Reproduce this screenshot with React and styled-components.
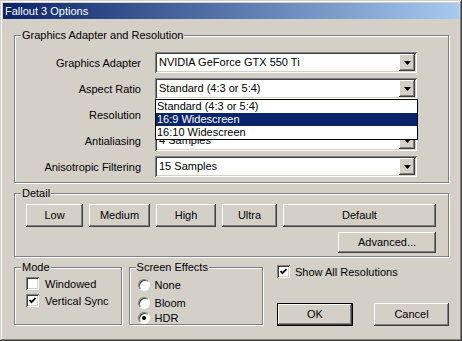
import React from 'react';
import styled, { createGlobalStyle } from 'styled-components';

const Global = createGlobalStyle`
  body {
    margin: 0;
    overflow: hidden;
    font-family: Tahoma, "Liberation Sans", Arial, sans-serif;
    font-size: 11px;
    color: #000;
  }
`;

const raised = `
  box-shadow: inset -1px -1px #404040, inset 1px 1px #fff, inset -2px -2px #808080, inset 2px 2px #d4d0c8;
`;

const sunken = `
  box-shadow: inset 1px 1px #808080, inset -1px -1px #fff, inset 2px 2px #404040, inset -2px -2px #d4d0c8;
`;

const Window = styled.div`
  width: 462px;
  height: 341px;
  box-sizing: border-box;
  padding: 3px;
  background: #d4d0c8;
  box-shadow: inset -1px -1px #404040, inset 1px 1px #d4d0c8, inset -2px -2px #808080, inset 2px 2px #fff;
`;

const TitleBar = styled.div`
  height: 16px;
  line-height: 16px;
  padding-left: 2px;
  color: #fff;
  background: linear-gradient(to right, #0a246a, #a6caf0);
`;

const Content = styled.div`
  padding: 0 10px 0 11px;
`;

const Group = styled.div`
  position: relative;
  box-sizing: border-box;
  border: 1px solid #808080;
  box-shadow: inset 1px 1px #fff, 1px 1px #fff;
  margin-top: ${p => p.$top ?? 10}px;
  margin-left: ${p => p.$left || 0}px;
  width: ${p => p.$w ? p.$w + 'px' : 'auto'};
  height: ${p => p.$h}px;
  padding: ${p => p.$pad};
`;

const Legend = styled.span`
  position: absolute;
  top: -8px;
  left: 6px;
  padding: 0 1px;
  line-height: 14px;
  background: #d4d0c8;
`;

const Rows = styled.div`
  display: flex;
  flex-direction: column;
  gap: 5px;
`;

const Row = styled.div`
  display: flex;
  align-items: center;
  height: 21px;
`;

const Label = styled.div`
  width: 126px;
  margin-right: 14px;
  text-align: right;
`;

const ComboBox = styled.div`
  position: relative;
  display: flex;
  width: 262px;
  height: 21px;
  box-sizing: border-box;
  padding: 2px;
  background: #fff;
  ${sunken}
`;

const ComboText = styled.div`
  flex: 1;
  padding-left: 2px;
  line-height: 17px;
  white-space: nowrap;
  overflow: hidden;
`;

const DropButton = styled.div`
  width: 16px;
  height: 17px;
  display: flex;
  align-items: center;
  justify-content: center;
  background: #d4d0c8;
  ${raised}
`;

const ListBox = styled.div`
  position: absolute;
  z-index: 10;
  top: 21px;
  left: 0;
  width: 263px;
  box-sizing: border-box;
  border: 1px solid #000;
  background: #fff;
`;

const ListItem = styled.div`
  height: 13px;
  line-height: 13px;
  padding-left: 1px;
  background: ${p => p.$sel ? '#0a246a' : '#fff'};
  color: ${p => p.$sel ? '#fff' : '#000'};
`;

const ButtonRow = styled.div`
  display: flex;
  gap: ${p => p.$gap || 6}px;
  justify-content: ${p => p.$end ? 'flex-end' : 'flex-start'};
  margin-top: ${p => p.$mt || 0}px;
`;

const Button = styled.div`
  box-sizing: border-box;
  width: ${p => p.$w ? p.$w + 'px' : 'auto'};
  flex: ${p => p.$w ? 'none' : 1};
  height: ${p => p.$h || 23}px;
  line-height: ${p => (p.$h || 23) - 1}px;
  text-align: center;
  background: #d4d0c8;
  ${raised}
  ${p => p.$default && `
    border: 1px solid #000;
    line-height: 20px;
  `}
`;

const Bottom = styled.div`
  display: flex;
  margin-top: 10px;
`;

const OptionRow = styled.div`
  display: flex;
  align-items: center;
  height: 13px;
  margin-top: ${p => p.$mt || 0}px;
`;

const CheckBox = styled.span`
  display: inline-flex;
  align-items: center;
  justify-content: center;
  width: 13px;
  height: 13px;
  box-sizing: border-box;
  margin-right: ${p => p.$gap || 6}px;
  background: #fff;
  ${sunken}
`;

const RadioBox = styled.span`
  display: inline-flex;
  align-items: center;
  justify-content: center;
  width: 12px;
  height: 12px;
  box-sizing: border-box;
  margin-right: 5px;
  border-radius: 50%;
  background: #fff;
  border: 1px solid;
  border-color: #808080 #fff #fff #808080;
  box-shadow: inset 1px 1px #404040;
`;

const Dot = styled.span`
  width: 4px;
  height: 4px;
  border-radius: 50%;
  background: #000;
`;

const RightColumn = styled.div`
  margin-left: 14px;
  margin-top: -2px;
  flex: 1;
`;

const Arrow = () => (
  <svg width="7" height="4" viewBox="0 0 7 4">
    <polygon points="0,0 7,0 3.5,4" fill="#000" />
  </svg>
);

const Tick = () => (
  <svg width="7" height="7" viewBox="0 0 7 7">
    <polyline points="0.5,3 2.5,5.2 6.5,1" fill="none" stroke="#000" strokeWidth="1.8" />
  </svg>
);

function Combo({ value, children }) {
  return (
    <ComboBox>
      <ComboText>{value}</ComboText>
      <DropButton><Arrow /></DropButton>
      {children}
    </ComboBox>
  );
}

function Check({ checked, label, mt, gap }) {
  return (
    <OptionRow $mt={mt}>
      <CheckBox $gap={gap}>{checked && <Tick />}</CheckBox>
      {label}
    </OptionRow>
  );
}

function Radio({ checked, label, mt }) {
  return (
    <OptionRow $mt={mt}>
      <RadioBox>{checked && <Dot />}</RadioBox>
      {label}
    </OptionRow>
  );
}

export default function App() {
  return (
    <Window>
      <Global />
      <TitleBar>Fallout 3 Options</TitleBar>
      <Content>
        <Group $top={16} $h={148} $pad="16px 0 0 0">
          <Legend>Graphics Adapter and Resolution</Legend>
          <Rows>
            <Row>
              <Label>Graphics Adapter</Label>
              <Combo value="NVIDIA GeForce GTX 550 Ti" />
            </Row>
            <Row>
              <Label>Aspect Ratio</Label>
              <Combo value="Standard (4:3 or 5:4)">
                <ListBox>
                  <ListItem>Standard (4:3 or 5:4)</ListItem>
                  <ListItem $sel>16:9 Widescreen</ListItem>
                  <ListItem>16:10 Widescreen</ListItem>
                </ListBox>
              </Combo>
            </Row>
            <Row>
              <Label>Resolution</Label>
              <Combo value="" />
            </Row>
            <Row>
              <Label>Antialiasing</Label>
              <Combo value="4 Samples" />
            </Row>
            <Row>
              <Label>Anisotropic Filtering</Label>
              <Combo value="15 Samples" />
            </Row>
          </Rows>
        </Group>

        <Group $h={64} $pad="10px 12px 0 11px">
          <Legend>Detail</Legend>
          <ButtonRow>
            <Button $w={57}>Low</Button>
            <Button $w={61}>Medium</Button>
            <Button $w={60}>High</Button>
            <Button $w={55}>Ultra</Button>
            <Button>Default</Button>
          </ButtonRow>
          <ButtonRow $end $mt={5}>
            <Button $w={98} $h={21}>Advanced...</Button>
          </ButtonRow>
        </Group>

        <Bottom>
          <Group $top={0} $w={108} $h={58} $pad="9px 0 0 11px">
            <Legend>Mode</Legend>
            <Check label="Windowed" />
            <Check checked label="Vertical Sync" mt={4} />
          </Group>
          <Group $top={0} $left={7} $w={135} $h={58} $pad="10px 0 0 8px">
            <Legend>Screen Effects</Legend>
            <Radio label="None" />
            <Radio label="Bloom" mt={5} />
            <Radio checked label="HDR" mt={2} />
          </Group>
          <RightColumn>
            <Check checked label="Show All Resolutions" gap={5} />
            <ButtonRow $mt={25} $gap={21}>
              <Button $w={76} $default>OK</Button>
              <Button $w={75}>Cancel</Button>
            </ButtonRow>
          </RightColumn>
        </Bottom>
      </Content>
    </Window>
  );
}
